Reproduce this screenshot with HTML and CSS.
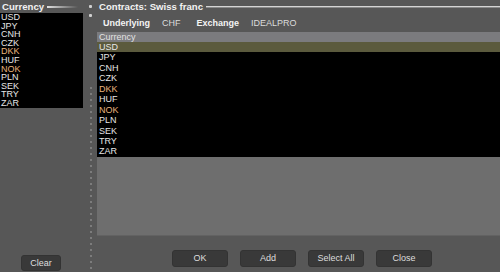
FILE: index.html
```html
<!DOCTYPE html>
<html lang="en">
<head>
<meta charset="UTF-8">
<meta name="viewport" content="width=device-width, initial-scale=1.0">
<title>Contracts</title>
<link rel="stylesheet" href="styles.css">
</head>
<body>
<div class="left-panel">
    <div class="panel-title left-title">Currency</div>
    <ul class="currency-list">
        <li>USD</li>
        <li>JPY</li>
        <li>CNH</li>
        <li>CZK</li>
        <li class="warn">DKK</li>
        <li>HUF</li>
        <li class="warn">NOK</li>
        <li>PLN</li>
        <li>SEK</li>
        <li>TRY</li>
        <li>ZAR</li>
    </ul>
    <div class="left-bottom">
        <button class="btn btn-clear">Clear</button>
    </div>
</div>

<div class="splitter">
    <span class="grip"></span>
    <span class="grip"></span>
    <div class="dots"></div>
</div>

<div class="right-panel">
    <div class="panel-title right-title">Contracts: Swiss franc</div>
    <div class="info-row">
        <span class="label">Underlying</span>
        <span class="value value-chf">CHF</span>
        <span class="label">Exchange</span>
        <span class="value">IDEALPRO</span>
    </div>
    <div class="table">
        <div class="table-header">Currency</div>
        <div class="table-body">
            <div class="row selected">USD</div>
            <div class="row">JPY</div>
            <div class="row">CNH</div>
            <div class="row">CZK</div>
            <div class="row warn">DKK</div>
            <div class="row">HUF</div>
            <div class="row warn">NOK</div>
            <div class="row">PLN</div>
            <div class="row">SEK</div>
            <div class="row">TRY</div>
            <div class="row">ZAR</div>
        </div>
        <div class="table-empty"></div>
    </div>
    <div class="button-row">
        <button class="btn">OK</button>
        <button class="btn">Add</button>
        <button class="btn">Select All</button>
        <button class="btn">Close</button>
    </div>
</div>
</body>
</html>
```

FILE: styles.css
```css
html, body {
    margin: 0;
    padding: 0;
}
body {
    width: 500px;
    height: 272px;
    overflow: hidden;
    display: flex;
    background-color: #575757;
    font-family: "Liberation Sans", Arial, sans-serif;
    font-size: 9px;
    color: #e6e6e6;
}

/* left side */
.left-panel {
    width: 83px;
    display: flex;
    flex-direction: column;
}
.panel-title {
    height: 13px;
    display: flex;
    align-items: center;
    font-weight: bold;
    font-size: 9.6px;
    color: #f2f2f2;
    padding-left: 2px;
    white-space: nowrap;
}
.left-title::after {
    content: "";
    width: 31px;
    height: 2px;
    margin-left: 3px;
    margin-top: 1px;
    background: linear-gradient(to right, #e0e0e0, #575757);
}
.currency-list {
    list-style: none;
    margin: 0;
    padding: 0 0 0 1px;
    height: 95px;
    background-color: #000;
}
.currency-list li {
    line-height: 8.6px;
    height: 8.6px;
}
.warn {
    color: #e8b47c;
}
.left-bottom {
    flex: 1;
    display: flex;
    align-items: flex-end;
    justify-content: center;
    padding: 0 1px 1px 0;
}

/* splitter */
.splitter {
    width: 14px;
    display: flex;
    flex-direction: column;
    align-items: flex-start;
    padding-left: 6px;
    box-sizing: border-box;
}
.grip {
    width: 3px;
    height: 3px;
    border-radius: 1px;
    background-color: #d0d0d0;
    margin-top: 5px;
}
.grip + .grip {
    margin-top: 6px;
}
.dots {
    flex: 1;
    width: 2px;
    margin: 70px 0 0 1px;
    background: repeating-linear-gradient(to bottom, #7c7c7c 0, #7c7c7c 2px, transparent 2px, transparent 6px);
}

/* right side */
.right-panel {
    flex: 1;
    display: flex;
    flex-direction: column;
    border-top: 1px solid #474747;
    margin-top: -1px;
}
.right-title::after {
    content: "";
    flex: 1;
    height: 1px;
    margin-left: 3px;
    margin-top: 1px;
    background-color: #d4d4d4;
    border-bottom: 1px solid #8a8a8a;
}
.info-row {
    height: 19px;
    display: flex;
    align-items: center;
    padding-left: 6px;
}
.label {
    font-weight: bold;
    color: #f4f4f4;
    margin-right: 12px;
}
.value {
    color: #dcdcdc;
}
.value-chf {
    margin-right: 16px;
}
.table {
    display: flex;
    flex-direction: column;
}
.table-header {
    height: 10px;
    line-height: 10px;
    padding-left: 2px;
    background-color: #7b7b7e;
    color: #e2e2e2;
}
.table-body {
    background-color: #000;
}
.row {
    height: 10.45px;
    line-height: 10.45px;
    padding-left: 2px;
}
.row.selected {
    background-color: #5b5a3d;
}
.table-empty {
    height: 78px;
    background-color: #6e6e6e;
    border-bottom: 1px solid #626262;
}
.button-row {
    display: flex;
    justify-content: center;
    gap: 12px;
    padding: 14px 0 0 7px;
}

/* buttons */
.btn {
    width: 56px;
    height: 17px;
    padding: 0;
    border: 1px solid #333;
    border-radius: 3px;
    background-color: #393939;
    color: #dedede;
    font-family: "Liberation Sans", Arial, sans-serif;
    font-size: 9px;
    cursor: pointer;
}
.btn-clear {
    width: 40px;
    height: 16px;
}
```
